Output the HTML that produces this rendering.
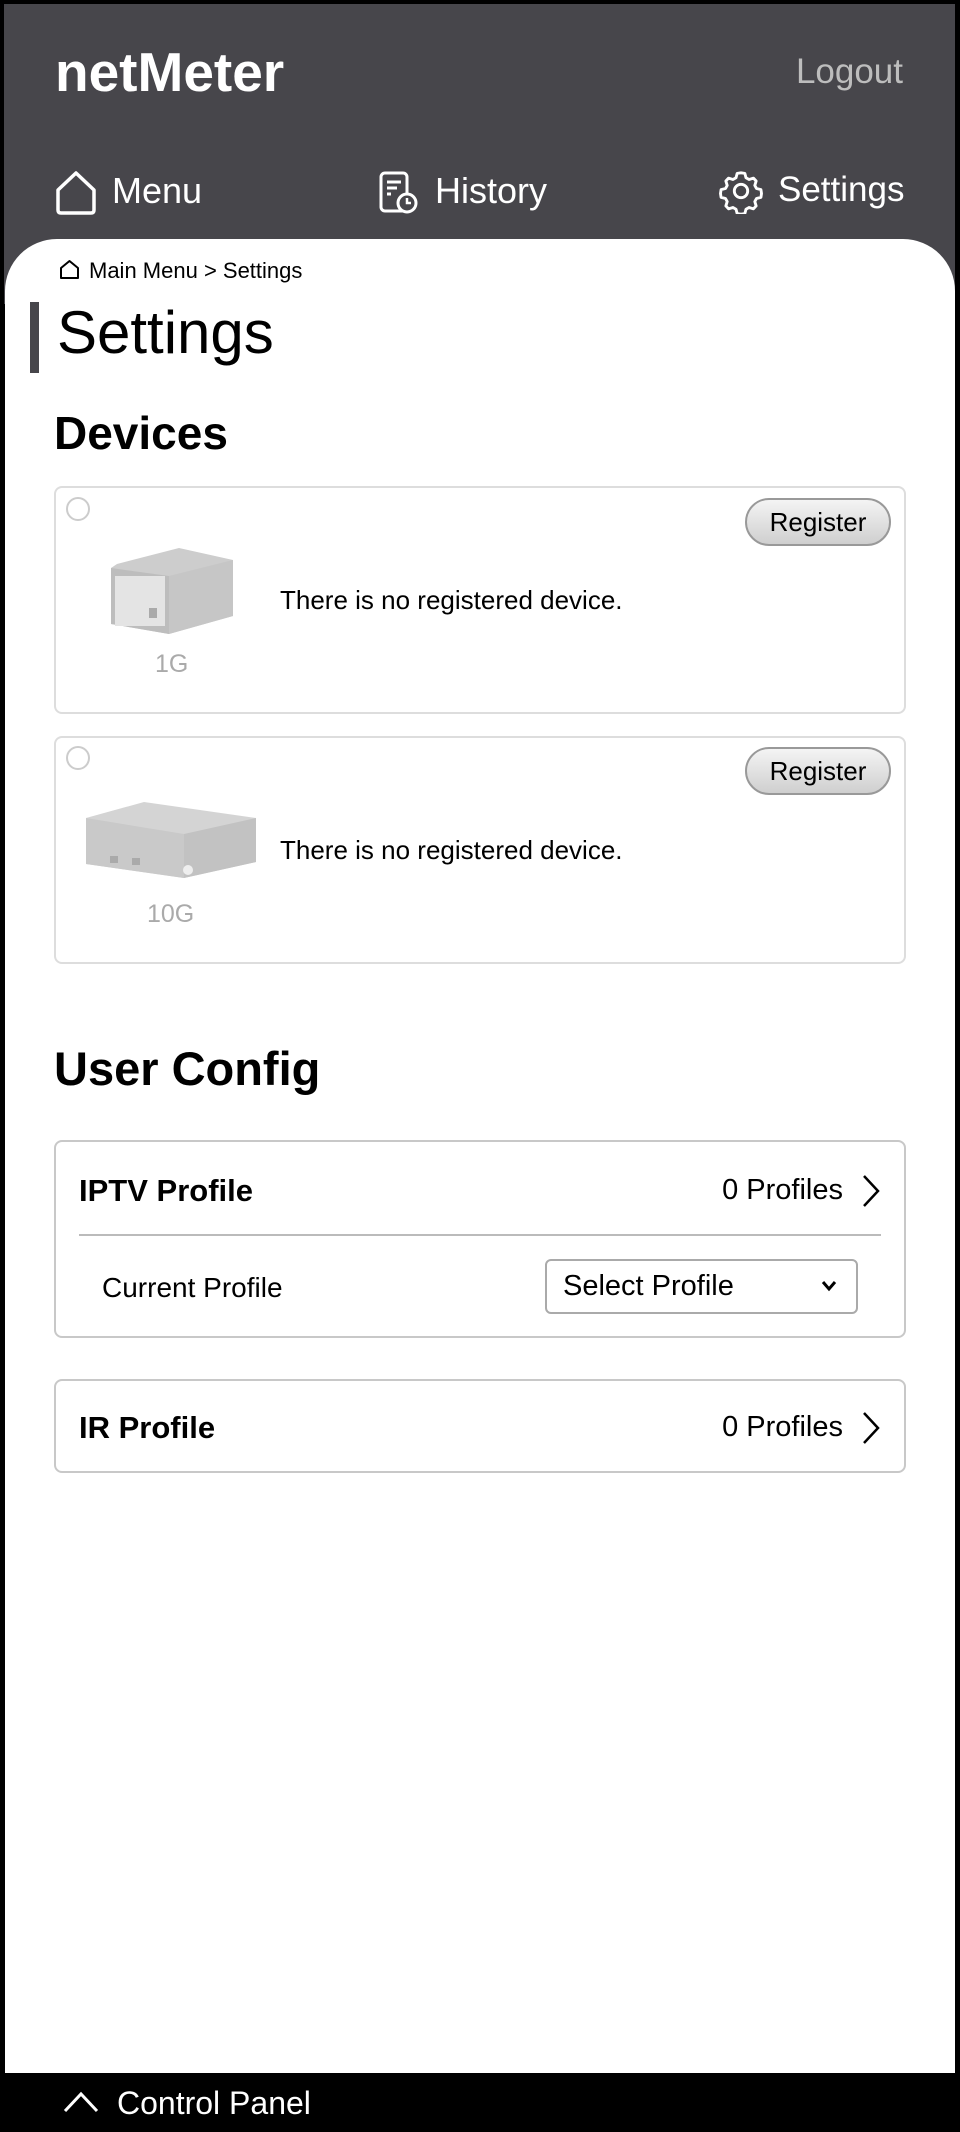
<!DOCTYPE html>
<html><head><meta charset="utf-8"><style>
*{box-sizing:border-box;margin:0;padding:0}
body{width:960px;height:2132px;background:#000;font-family:"Liberation Sans","DejaVu Sans",sans-serif;position:relative;overflow:hidden;color:#000}
.hdr{position:absolute;left:4px;top:4px;width:951px;height:300px;background:#47464b}
.panel{position:absolute;left:5px;top:239px;width:950px;height:1834px;background:#fff;border-radius:52px 52px 0 0}
.a{position:absolute;white-space:nowrap}
.card{position:absolute;left:54px;width:852px;border:2px solid #ddd;border-radius:8px;background:#fff}
.card2{position:absolute;left:54px;width:852px;border:2px solid #c8c8c8;border-radius:8px;background:#fff}
.radio{position:absolute;width:24px;height:24px;border:2px solid #ccc;border-radius:50%}
.reg{position:absolute;width:146px;height:48px;border:2px solid #999;border-radius:24px;background:linear-gradient(#f4f4f4,#cfcfcf);font-size:26px;text-align:center;line-height:44px}
.msg{font-size:26px}
.lbl{font-size:25px;color:#aaa}
</style></head><body>
<div class="hdr"></div>
<div class="a" style="left:55px;top:40px;font-size:55px;font-weight:bold;color:#fff">netMeter</div>
<div class="a" style="right:57px;top:52px;font-size:35px;color:#bdbdbd">Logout</div>

<svg class="a" style="left:54px;top:170px" width="44" height="46" viewBox="0 0 44 46"><path d="M4 20 L22 3 L40 20 V40 Q40 43 37 43 H7 Q4 43 4 40 Z" fill="none" stroke="#fff" stroke-width="3.5" stroke-linejoin="round"/></svg>
<div class="a" style="left:112px;top:170px;font-size:36px;color:#fff">Menu</div>
<svg class="a" style="left:378px;top:170px" width="42" height="46" viewBox="0 0 42 46"><rect x="3" y="3" width="26" height="38" rx="4" fill="none" stroke="#fff" stroke-width="3"/><path d="M9 12h14M9 18h10M9 24h4" stroke="#fff" stroke-width="3"/><circle cx="29" cy="33" r="9" fill="#47464b" stroke="#fff" stroke-width="3"/><path d="M29 28v5h4" stroke="#fff" stroke-width="2.5" fill="none"/></svg>
<div class="a" style="left:435px;top:170px;font-size:36px;color:#fff">History</div>
<svg class="a" style="left:718px;top:168px" width="46" height="46" viewBox="0 0 24 24"><path d="M12 2.5l2 .3.6 2.3 1.6.9 2.3-.7 1.4 1.5-.7 2.3.9 1.6 2.3.6.3 2-.3 2-2.3.6-.9 1.6.7 2.3-1.4 1.5-2.3-.7-1.6.9-.6 2.3-2 .3-2-.3-.6-2.3-1.6-.9-2.3.7-1.4-1.5.7-2.3-.9-1.6-2.3-.6-.3-2 .3-2 2.3-.6.9-1.6-.7-2.3 1.4-1.5 2.3.7 1.6-.9.6-2.3z" fill="none" stroke="#fff" stroke-width="1.5" stroke-linejoin="round"/><circle cx="12" cy="12" r="3.5" fill="none" stroke="#fff" stroke-width="1.5"/></svg>
<div class="a" style="left:778px;top:170px;font-size:35px;color:#fff">Settings</div>

<div class="panel"></div>
<svg class="a" style="left:59px;top:259px" width="21" height="22" viewBox="0 0 21 22"><path d="M2 9 L10.5 2 L19 9 V19 H2 Z" fill="none" stroke="#000" stroke-width="2" stroke-linejoin="round"/></svg>
<div class="a" style="left:89px;top:258px;font-size:22px">Main Menu &gt; Settings</div>
<div class="a" style="left:30px;top:302px;width:9px;height:71px;background:#47464b"></div>
<div class="a" style="left:57px;top:298px;font-size:60px">Settings</div>
<div class="a" style="left:54px;top:406px;font-size:46px;font-weight:bold">Devices</div>

<div class="card" style="top:486px;height:228px"></div>
<div class="radio" style="left:66px;top:497px"></div>
<div class="reg" style="left:745px;top:498px">Register</div>
<svg class="a" style="left:109px;top:546px" width="126" height="90" viewBox="0 0 126 90"><path d="M8 18 L70 2 L124 14 V70 L60 88 L2 78 V22 Z" fill="#cdcdcd"/><path d="M2 22 L60 30 V88 L2 78 Z" fill="#bdbdbd"/><path d="M60 30 L124 14 V70 L60 88 Z" fill="#c6c6c6"/><rect x="6" y="30" width="50" height="50" fill="#e4e4e4"/><rect x="40" y="62" width="8" height="10" fill="#aaa"/></svg>
<div class="a lbl" style="left:155px;top:650px">1G</div>
<div class="a msg" style="left:280px;top:585px">There is no registered device.</div>

<div class="card" style="top:736px;height:228px"></div>
<div class="radio" style="left:66px;top:746px"></div>
<div class="reg" style="left:745px;top:747px">Register</div>
<svg class="a" style="left:84px;top:800px" width="174" height="80" viewBox="0 0 174 80"><path d="M2 18 L60 2 L172 18 V62 L100 78 L2 64 Z" fill="#d4d4d4"/><path d="M2 18 L100 34 V78 L2 64 Z" fill="#c9c9c9"/><path d="M100 34 L172 18 V62 L100 78 Z" fill="#c2c2c2"/><rect x="26" y="56" width="8" height="7" fill="#aaa"/><rect x="48" y="58" width="8" height="7" fill="#aaa"/><circle cx="104" cy="70" r="5" fill="#eee"/></svg>
<div class="a lbl" style="left:147px;top:900px">10G</div>
<div class="a msg" style="left:280px;top:835px">There is no registered device.</div>

<div class="a" style="left:54px;top:1041px;font-size:47px;font-weight:bold">User Config</div>

<div class="card2" style="top:1140px;height:198px"></div>
<div class="a" style="left:79px;top:1173px;font-size:31px;font-weight:bold">IPTV Profile</div>
<div class="a" style="right:117px;top:1174px;font-size:29px">0 Profiles</div>
<svg class="a" style="left:860px;top:1173px" width="22" height="36" viewBox="0 0 22 36"><path d="M4 3 L18 18 L4 33" fill="none" stroke="#000" stroke-width="2.5"/></svg>
<div class="a" style="left:79px;top:1234px;width:802px;height:2px;background:#bbb"></div>
<div class="a" style="left:102px;top:1272px;font-size:28px">Current Profile</div>
<div class="a" style="left:545px;top:1259px;width:313px;height:55px;border:2px solid #aaa;border-radius:6px"></div>
<div class="a" style="left:563px;top:1270px;font-size:29px">Select Profile</div>
<svg class="a" style="left:820px;top:1279px" width="18" height="14" viewBox="0 0 18 14"><path d="M3 3 L9 10 L15 3" fill="none" stroke="#000" stroke-width="3"/></svg>

<div class="card2" style="top:1379px;height:94px"></div>
<div class="a" style="left:79px;top:1410px;font-size:31px;font-weight:bold">IR Profile</div>
<div class="a" style="right:117px;top:1411px;font-size:29px">0 Profiles</div>
<svg class="a" style="left:860px;top:1410px" width="22" height="36" viewBox="0 0 22 36"><path d="M4 3 L18 18 L4 33" fill="none" stroke="#000" stroke-width="2.5"/></svg>

<svg class="a" style="left:62px;top:2090px" width="38" height="24" viewBox="0 0 38 24"><path d="M3 21 L19 4 L35 21" fill="none" stroke="#fff" stroke-width="3"/></svg>
<div class="a" style="left:117px;top:2085px;font-size:32px;color:#fff">Control Panel</div>
</body></html>
